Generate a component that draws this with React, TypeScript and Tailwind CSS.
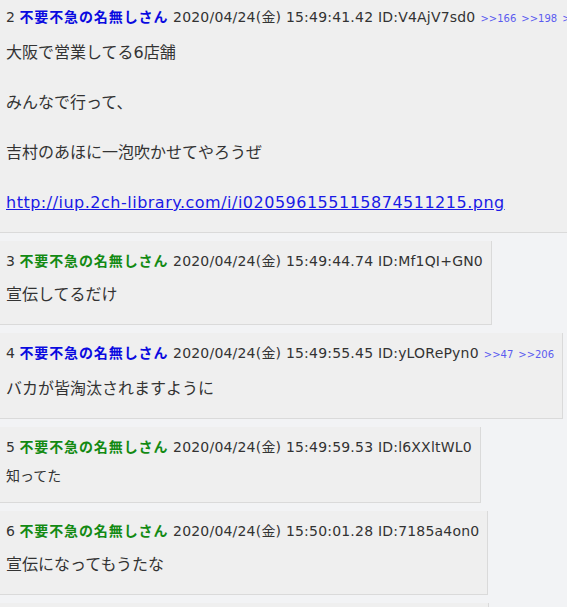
import React from "react";

type Post = {
  no: number;
  name: string;
  color: "blue" | "green";
  date: string;
  id: string;
  replies?: string[];
  lines: string[];
  link?: string;
  small?: boolean;
  wide?: boolean;
};

const posts: Post[] = [
  {
    no: 2,
    name: "不要不急の名無しさん",
    color: "blue",
    date: "2020/04/24(金) 15:49:41.42",
    id: "ID:V4AjV7sd0",
    replies: [">>166", ">>198", ">>206", ">>233"],
    lines: ["大阪で営業してる6店舗", "みんなで行って、", "吉村のあほに一泡吹かせてやろうぜ"],
    link: "http://iup.2ch-library.com/i/i020596155115874511215.png",
    wide: true,
  },
  {
    no: 3,
    name: "不要不急の名無しさん",
    color: "green",
    date: "2020/04/24(金) 15:49:44.74",
    id: "ID:Mf1QI+GN0",
    lines: ["宣伝してるだけ"],
  },
  {
    no: 4,
    name: "不要不急の名無しさん",
    color: "blue",
    date: "2020/04/24(金) 15:49:55.45",
    id: "ID:yLORePyn0",
    replies: [">>47", ">>206"],
    lines: ["バカが皆淘汰されますように"],
  },
  {
    no: 5,
    name: "不要不急の名無しさん",
    color: "green",
    date: "2020/04/24(金) 15:49:59.53",
    id: "ID:l6XXltWL0",
    lines: ["知ってた"],
    small: true,
  },
  {
    no: 6,
    name: "不要不急の名無しさん",
    color: "green",
    date: "2020/04/24(金) 15:50:01.28",
    id: "ID:7185a4on0",
    lines: ["宣伝になってもうたな"],
  },
  {
    no: 7,
    name: "不要不急の名無しさん",
    color: "green",
    date: "2020/04/24(金) 15:50:03.11",
    id: "ID:Qw8xRt2L0",
    lines: ["それな"],
  },
];

function PostBox({ p }: { p: Post }) {
  return (
    <div
      className={
        "bg-[#efefef] border-r border-b border-[#dadada] pl-[6px] pr-[8px] pt-[8px] pb-[17px] mb-[8px] " +
        (p.wide ? "w-[700px] border-r-0" : "inline-block")
      }
    >
      <div className="whitespace-nowrap text-[14px] leading-[24px] text-[#333]">
        <span>{p.no} </span>
        <span
          className={
            "font-bold tracking-[0.9px] " +
            (p.color === "blue" ? "text-[#0a0ae0]" : "text-[#138a13]")
          }
        >
          {p.name}
        </span>
        <span className="tracking-[0.2px]"> {p.date} </span>
        <span className="tracking-[0.2px]">{p.id}</span>
        {p.replies && (
          <span className="text-[10px] text-[#5b5bf0]">
            {p.replies.map((r) => (
              <span key={r} className="ml-[5px]">
                {r}
              </span>
            ))}
          </span>
        )}
      </div>
      <div
        className={
          "mt-[9px] text-[#333] " +
          (p.small ? "text-[14px] leading-[17px]" : "text-[16px] leading-[25px]")
        }
      >
        {p.lines.map((l, i) => (
          <React.Fragment key={i}>
            {i > 0 && (
              <>
                <br />
                <br />
              </>
            )}
            {l}
          </React.Fragment>
        ))}
        {p.link && (
          <>
            <br />
            <br />
            <a href="#" className="text-[#1a1ae6] underline tracking-[0.5px]">
              {p.link}
            </a>
          </>
        )}
      </div>
    </div>
  );
}

export default function App() {
  return (
    <div
      className="w-[567px] h-[607px] overflow-hidden bg-[#f2f3f5]"
      style={{ fontFamily: "'DejaVu Sans', 'Noto Sans CJK JP', sans-serif" }}
    >
      <div className="mt-[-3px] flex flex-col items-start">
        {posts.map((p) => (
          <PostBox key={p.no} p={p} />
        ))}
      </div>
    </div>
  );
}
